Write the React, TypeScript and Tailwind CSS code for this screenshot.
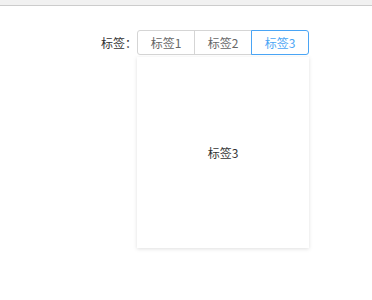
import { useState } from "react";

const tabs = ["标签1", "标签2", "标签3"];

export default function App() {
    const [active, setActive] = useState(2);

    return (
        <div className="w-[372px] h-[300px] bg-white font-['Noto_Sans_CJK_SC','Noto_Sans',sans-serif] text-[12px]">
            {/* 顶部条 */}
            <div className="h-[6px] bg-[#f1f1f1] border-b border-[#cccccc]" />

            <div className="flex items-start pl-[101px] pt-[24px]">
                <div className="h-[25px] flex items-center text-[#333333] w-[36px]">标签：</div>

                <div className="flex flex-col w-[172px]">
                    {/* 按钮组 */}
                    <div className="flex h-[25px]">
                        {tabs.map((t, i) => (
                            <button
                                key={t}
                                onClick={() => setActive(i)}
                                className={`flex-1 flex items-center justify-center border leading-none ${
                                    i === 0 ? "rounded-l-[3px]" : "-ml-px"
                                } ${i === tabs.length - 1 ? "rounded-r-[3px]" : ""} ${
                                    i === active
                                        ? "border-[#4aa5f5] text-[#4aa5f5] relative z-10"
                                        : "border-[#d5d5d5] text-[#666666]"
                                }`}
                            >
                                {t}
                            </button>
                        ))}
                    </div>

                    {/* 内容面板 */}
                    <div className="mt-[2px] h-[191px] bg-white shadow-[0_1px_4px_rgba(0,0,0,0.13)] flex items-center justify-center text-[#333333]">
                        {tabs[active]}
                    </div>
                </div>
            </div>
        </div>
    );
}
